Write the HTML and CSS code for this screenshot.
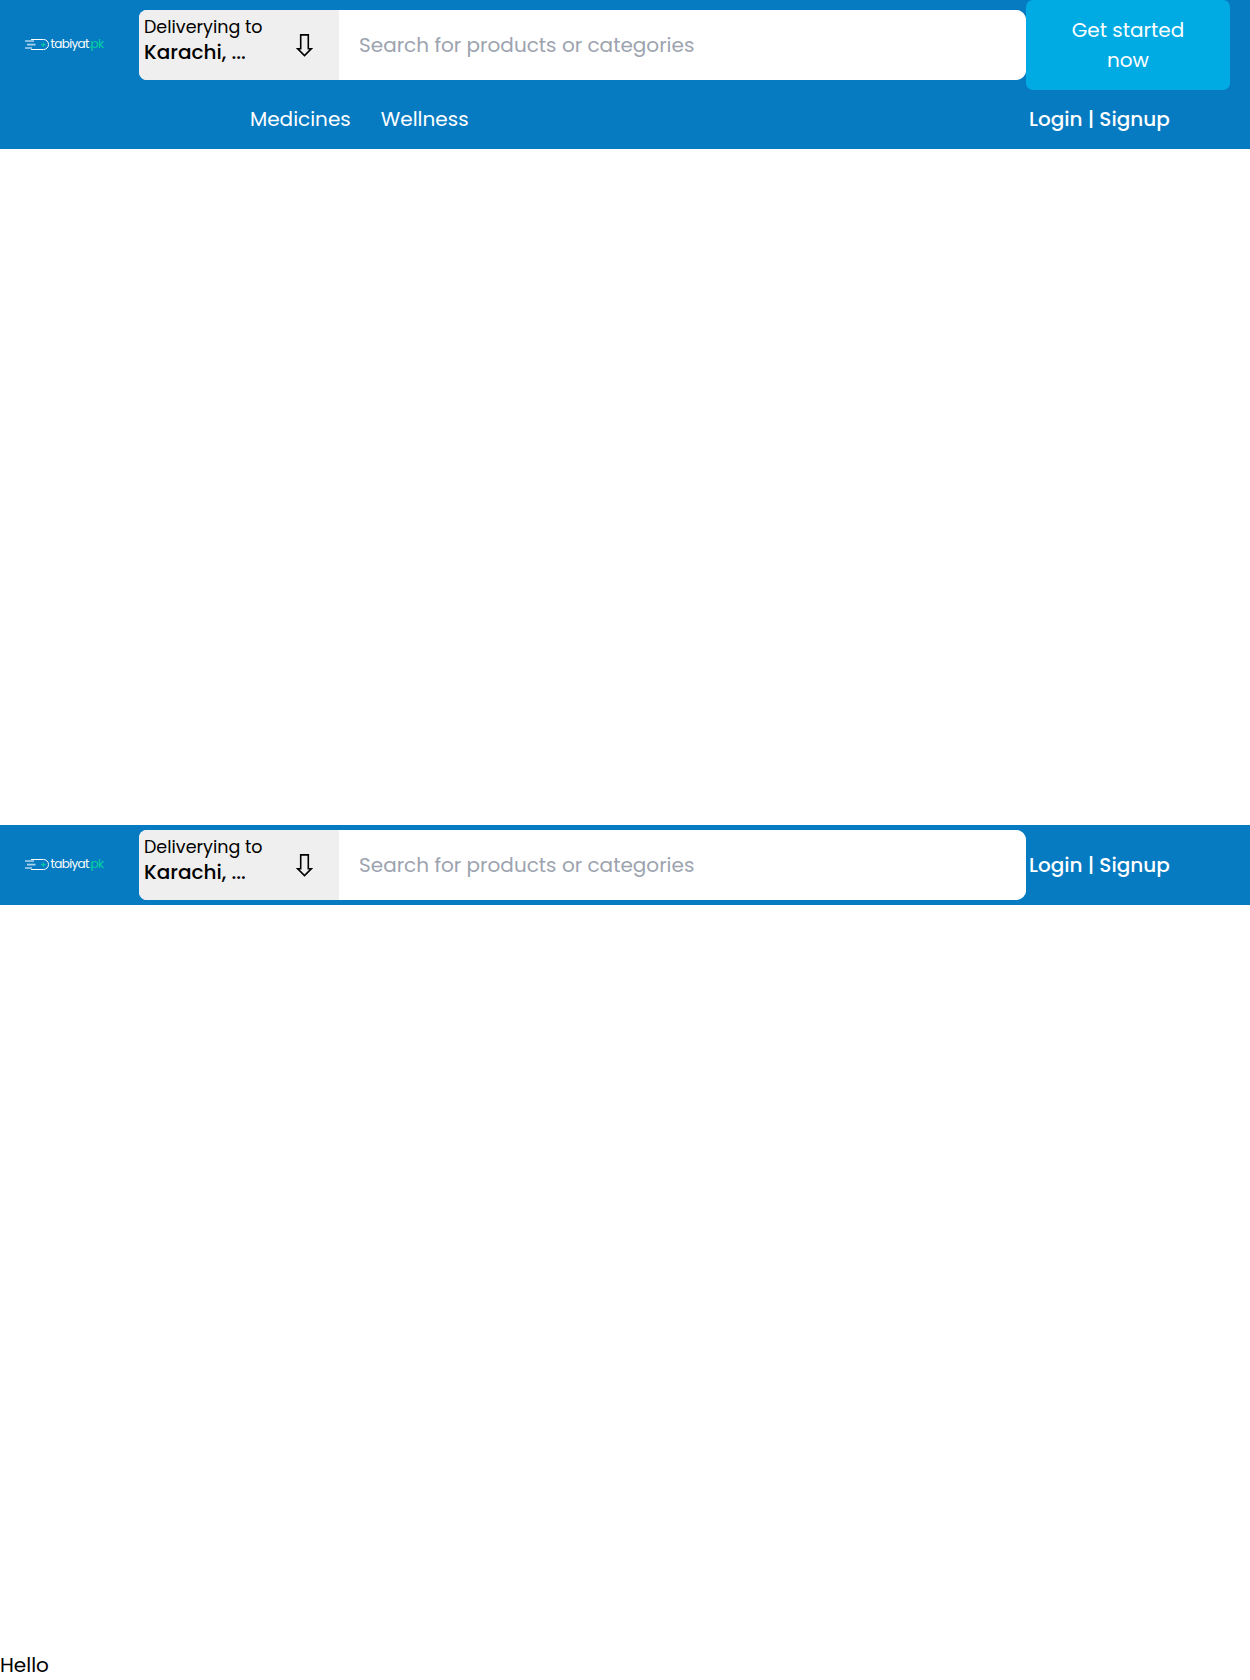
FILE: index.html
```html
<!DOCTYPE html>
<html lang="en">
<head>
<meta charset="utf-8">
<title>tabiyat.pk</title>
<link rel="stylesheet" href="styles.css">
</head>
<body>
<header class="header header-main">
  <div class="bar">
    <a class="brand">
      <svg class="logo" viewBox="0 -3 84 20" width="84" height="20">
        <g fill="none" stroke="#fff" stroke-width="1"><path d="M6 1.5H18.5A5 5 0 0 1 18.5 11.5H6"/><path d="M0 3H9M0 10H7"/><path d="M2 6.6H10.5" stroke-width="1.8" opacity=".65"/></g>
        <path d="M18.3 4.5V9M16 6.7H20.6" stroke="#00c9a7" stroke-width="1.2"/>
        <text class="logo-text" x="25.5" y="9.8" fill="#fff">tabiyat<tspan fill="#00d19f">.pk</tspan></text>
      </svg>
    </a>
    <div class="search">
      <button class="location"><span class="place"><span class="label">Deliverying to</span><span class="city">Karachi, ...</span></span><svg class="arrow" viewBox="0 0 17 23" width="17" height="23"><path d="M4.7 .9H12.3V14.7H15.3L8.5 21.5L1.7 14.7H4.7Z" fill="none" stroke="#000" stroke-width="1.6"/></svg></button>
      <input class="field" type="text" placeholder="Search for products or categories">
    </div>
    <button class="cta">Get started now</button>
  </div>
  <nav class="menu">
    <div class="links"><a>Medicines</a><a>Wellness</a></div>
    <a class="login">Login | Signup</a>
  </nav>
</header>
<header class="header header-compact">
  <div class="bar">
    <a class="brand">
      <svg class="logo" viewBox="0 -3 84 20" width="84" height="20">
        <g fill="none" stroke="#fff" stroke-width="1"><path d="M6 1.5H18.5A5 5 0 0 1 18.5 11.5H6"/><path d="M0 3H9M0 10H7"/><path d="M2 6.6H10.5" stroke-width="1.8" opacity=".65"/></g>
        <path d="M18.3 4.5V9M16 6.7H20.6" stroke="#00c9a7" stroke-width="1.2"/>
        <text class="logo-text" x="25.5" y="9.8" fill="#fff">tabiyat<tspan fill="#00d19f">.pk</tspan></text>
      </svg>
    </a>
    <div class="search">
      <button class="location"><span class="place"><span class="label">Deliverying to</span><span class="city">Karachi, ...</span></span><svg class="arrow" viewBox="0 0 17 23" width="17" height="23"><path d="M4.7 .9H12.3V14.7H15.3L8.5 21.5L1.7 14.7H4.7Z" fill="none" stroke="#000" stroke-width="1.6"/></svg></button>
      <input class="field" type="text" placeholder="Search for products or categories">
    </div>
    <a class="login">Login | Signup</a>
  </div>
</header>
<main class="content"><p class="greeting">Hello</p></main>
</body>
</html>
```
FILE: styles.css
```css
* { box-sizing: border-box; }
body {
  margin: 0;
  min-height: 1680px;
  display: flex;
  flex-direction: column;
  background: #fff;
  color: #000;
  font: 400 20px/30px Poppins, Inter, sans-serif;
}
button, input { border: 0; margin: 0; font: inherit; color: inherit; }
.header { background: #067bc2; color: #fff; }
.header-main { height: 149px; margin-bottom: 676px; }
.header-compact { height: 80px; }
.bar { display: flex; align-items: center; height: 90px; }
.header-compact .bar { height: 80px; }
.brand { width: 139px; padding-left: 25px; }
.logo { display: block; overflow: visible; }
.logo-text { font-size: 12px; font-weight: 400; letter-spacing: -0.65px; }
.search { display: flex; width: 887px; height: 70px; border-radius: 8px 10px 10px 8px; overflow: hidden; background: #fff; }
.location {
  display: flex;
  align-items: flex-start;
  width: 200px;
  padding: 3px 0 0 5px;
  background: #efefef;
  color: #000;
  text-align: left;
}
.place { display: flex; flex-direction: column; width: 152px; white-space: nowrap; }
.label { font-size: 17.5px; line-height: 29px; }
.city { line-height: 20px; font-weight: 500; }
.arrow { margin-top: 21px; }
.field { flex: 1; padding: 0 20px; outline: 0; background: #fff; color: #000; }
.field::placeholder { color: #9ca3af; opacity: 1; }
.cta { width: 204px; height: 90px; padding: 0 40px; border-radius: 7px; background: #00abe4; color: #fff; }
.menu { display: flex; align-items: center; justify-content: space-between; height: 58px; padding-left: 250px; }
.links { display: flex; gap: 30px; }
.login { width: 224px; padding-left: 3px; font-weight: 500; }
.menu .login { width: 221px; padding-left: 0; }
.content { margin-top: auto; }
.greeting { margin: 0; }
```
